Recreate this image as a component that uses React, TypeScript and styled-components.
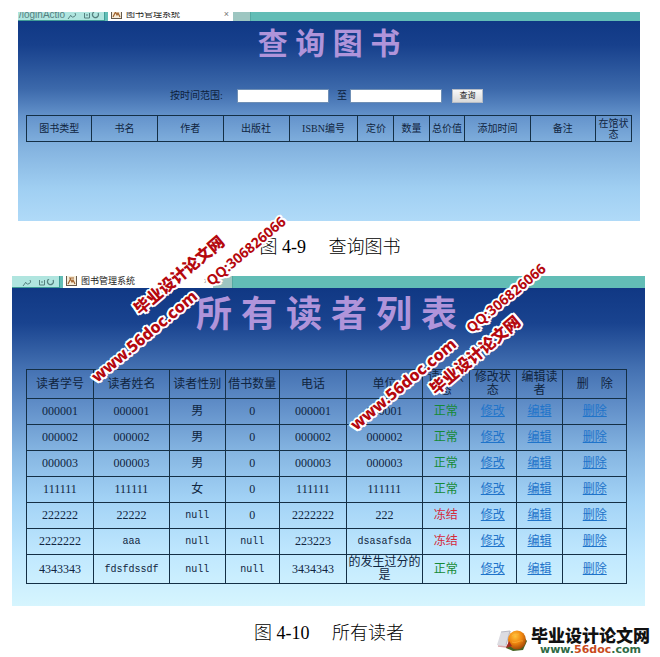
import React from "react";
import styled, { createGlobalStyle, css } from "styled-components";

const serif = `"Liberation Serif", "Noto Sans CJK SC", serif`;
const sans = `"Liberation Sans", "Noto Sans CJK SC", sans-serif`;

const GlobalStyle = createGlobalStyle`
  *, *::before, *::after { box-sizing: border-box; }
  body { margin: 0; background: #fff; font-family: ${serif}; }
`;

const Page = styled.main`
  position: relative;
  padding-top: 12px;
  overflow: hidden;
`;

const BookFigure = styled.section`
  margin: 0 20px 0 18px;
`;

const ReaderFigure = styled.section`
  margin: 0 15px 0 12px;
`;

const TabStrip = styled.div<{ $height: number }>`
  display: flex;
  align-items: stretch;
  height: ${(p) => p.$height}px;
  overflow: hidden;
  background: #62bdb6;
  font-family: ${sans};
`;

const AddressEnd = styled.div<{ $width: number }>`
  display: flex;
  align-items: flex-end;
  justify-content: space-between;
  width: ${(p) => p.$width}px;
  padding: 0 5px 0 1px;
  margin-right: 3px;
  border: solid #3f9d96;
  border-width: 0 1px 1px 0;
  background: #b0e5df;
  color: #55807f;
  font-size: 10px;
  line-height: 10px;
  white-space: nowrap;
`;

const Tab = styled.div<{ $width: number; $size: number }>`
  display: flex;
  align-items: flex-end;
  gap: 4px;
  width: ${(p) => p.$width}px;
  padding: 0 4px 2px 3px;
  background: #fff;
  color: #222;
  font-size: ${(p) => p.$size}px;
  line-height: ${(p) => p.$size}px;
  white-space: nowrap;
`;

const TabClose = styled.span`
  margin-left: auto;
  color: #777;
`;

const NewTab = styled.div<{ $width: number }>`
  width: ${(p) => p.$width}px;
  border-right: 1px solid #55aaa3;
  background: #9dc6c1;
`;

const BookBody = styled.div`
  min-height: 200px;
  padding: 6px 8px 79px;
  background: linear-gradient(#103885 0%, #17408c 12%, #3c69ab 34%, #6594cc 48%, #82b1de 62%, #a0cff2 84%, #b0daf8 100%);
`;

const ReaderBody = styled.div`
  min-height: 318px;
  padding: 4px 18px 21px 14px;
  background: linear-gradient(#103884 0%, #19438f 11%, #4370b1 25%, #6391ca 38%, #86b6e2 52%, #a3d3f6 67%, #c0e8fe 84%, #d6f5fe 100%);
`;

const Title = styled.h1<{ $large?: boolean }>`
  margin: 0;
  color: #b094da;
  font-size: ${(p) => (p.$large ? 36 : 30)}px;
  line-height: ${(p) => (p.$large ? 46 : 34)}px;
  font-weight: 700;
  text-align: center;
`;

const SearchForm = styled.form`
  display: flex;
  align-items: center;
  justify-content: center;
  margin: 28px 5px 12px 0;
  color: #0d1f3c;
  font-size: 10px;
  line-height: 14px;
`;

const StartLabel = styled.label`
  margin-right: 14px;
`;

const EndLabel = styled.label`
  margin: 0 3px 0 8px;
`;

const DateInput = styled.input`
  width: 92px;
  height: 14px;
  padding: 0 2px;
  border: 1px solid #6f8fb5;
  background: #fff;
  font-size: 10px;
`;

const SearchButton = styled.button`
  width: 31px;
  height: 14px;
  margin-left: 10px;
  padding: 0;
  border: 1px solid #b5bcc6;
  background: linear-gradient(#f8f8f8, #d9d9d9);
  color: #222;
  font-family: ${sans};
  font-size: 8px;
  line-height: 12px;
`;

const Grid = styled.table<{ $size: number; $line: number }>`
  width: 100%;
  table-layout: fixed;
  border-collapse: collapse;
  color: #10253f;
  font-size: ${(p) => p.$size}px;
  line-height: ${(p) => p.$line}px;
  text-align: center;
`;

const ReaderTableArea = styled.div`
  margin-top: 31px;
`;

const Col = styled.col<{ $w: number }>`
  width: ${(p) => p.$w}%;
`;

const cell = css`
  padding: 0;
  border: 1px solid #142f45;
  font-weight: 400;
`;

const HeadCell = styled.th<{ $height: number }>`
  ${cell}
  height: ${(p) => p.$height}px;
`;

const Cell = styled.td<{ $mono?: boolean }>`
  ${cell}
  height: 26px;
  ${(p) =>
    p.$mono &&
    css`
      font-family: "Liberation Mono", monospace;
      font-size: 10px;
    `}
`;

const Row = styled.tr<{ $tall?: boolean }>`
  height: ${(p) => (p.$tall ? 29 : 26)}px;
`;

const Status = styled.span<{ $ok: boolean }>`
  color: ${(p) => (p.$ok ? "#158a35" : "#d5293a")};
`;

const ActionLink = styled.a`
  color: #1f74ca;
  text-decoration: underline;
`;

const Caption = styled.p`
  margin: 0;
  color: #000;
  font-size: 18px;
  line-height: 27px;
  font-weight: 300;
  text-align: center;
  white-space: pre;
`;

const MiddleCaption = styled(Caption)`
  padding: 13px 0 15px;
`;

const Footer = styled.footer`
  display: grid;
  grid-template-columns: 1fr auto 1fr;
  align-items: start;
  padding: 14px 10px 0 8px;
`;

const Brand = styled.a`
  display: flex;
  grid-column: 3;
  justify-self: end;
  align-items: center;
  gap: 3px;
  margin-top: 6px;
  color: #111;
  text-decoration: none;
  white-space: nowrap;
`;

const BrandText = styled.span`
  display: flex;
  flex-direction: column;
  align-items: center;
`;

const BrandName = styled.span`
  font-family: "Noto Sans CJK SC", sans-serif;
  font-size: 17px;
  line-height: 17px;
  font-weight: 900;
`;

const BrandUrl = styled.span`
  color: #2f6b45;
  font-family: "DejaVu Sans", sans-serif;
  font-size: 11px;
  line-height: 13px;
  font-weight: 700;
`;

const BrandAccent = styled.span`
  color: #c94b1c;
`;

const Watermark = styled.span<{ $x: number; $y: number; $size: number; $weight: number }>`
  position: absolute;
  left: ${(p) => p.$x}px;
  top: ${(p) => p.$y}px;
  transform: translate(-50%, -50%) rotate(-40deg);
  color: #b5080e;
  font-family: "Noto Sans", "Noto Sans CJK SC", sans-serif;
  font-size: ${(p) => p.$size}px;
  line-height: 20px;
  font-weight: ${(p) => p.$weight};
  white-space: nowrap;
  pointer-events: none;
  text-shadow: 2px 0 #fff, -2px 0 #fff, 0 2px #fff, 0 -2px #fff, 1px 1px #fff, -1px 1px #fff, 1px -1px #fff,
    -1px -1px #fff, 2px 1px #fff, -2px 1px #fff, 2px -1px #fff, -2px -1px #fff;
`;

const TabIcon = () => (
  <svg width="11" height="11" viewBox="0 0 11 11" aria-hidden="true">
    <rect x="0.5" y="0.5" width="10" height="10" fill="#f6ecd8" stroke="#65594c" />
    <path d="M2 9 4.5 4 6 7 7 5l2 4M3 3h5" fill="none" stroke="#a0622d" strokeWidth="1.2" />
  </svg>
);

const StripGlyphs = () => (
  <svg width="32" height="8" viewBox="0 0 32 8" fill="none" stroke="#55807f" aria-hidden="true">
    <path d="M1 7 4 3M4 4a2.5 2.5 0 0 0 4-3" />
    <path d="M17.500 1v5h5V1M19 3h2" />
    <path d="M27 0a3 3 0 1 0 4 1" strokeWidth="1.300" />
  </svg>
);

const BrandMark = () => (
  <svg width="31" height="24" viewBox="0 0 31 24" aria-hidden="true">
    <defs>
      <radialGradient id="orb" cx="0.4" cy="0.3" r="0.75">
        <stop offset="0" stopColor="#ffc23a" />
        <stop offset="0.5" stopColor="#f0860f" />
        <stop offset="1" stopColor="#9a4208" />
      </radialGradient>
    </defs>
    <path d="M4 3 14 2 9 18 0 16z" fill="#dcdce2" />
    <path d="M4 3 13 2 9 16" fill="none" stroke="#b9b9c4" />
    <path d="M1 17 9 18 13 14" fill="none" stroke="#d9a9ad" strokeWidth="1.500" />
    <path d="M12 14 9 19 16 22 26 21 30 12 26 7z" fill="#466321" />
    <ellipse cx="20" cy="11" rx="9" ry="9.500" fill="url(#orb)" />
    <path d="M15 7c3-3 5-1 7-2M15 13c4 2 7-2 11-1" fill="none" stroke="#ffc04a" opacity="0.5" />
    <path d="M12 12 9 19l6-2z" fill="#a52b22" />
  </svg>
);

const bookColumns: [string, number][] = [
  ["图书类型", 65.5],
  ["书名", 65.5],
  ["作者", 66],
  ["出版社", 66],
  ["ISBN编号", 69],
  ["定价", 36],
  ["数量", 35.5],
  ["总价值", 35.5],
  ["添加时间", 65.5],
  ["备注", 65.5],
  ["在馆状态", 36],
];

const readerColumns: [string, number][] = [
  ["读者学号", 67],
  ["读者姓名", 76],
  ["读者性别", 56],
  ["借书数量", 54],
  ["电话", 67.5],
  ["单位", 75.5],
  ["读者状态", 47.5],
  ["修改状态", 46.5],
  ["编辑读者", 47],
  ["删　除", 63.5],
];

const readers = [
  { cells: ["000001", "000001", "男", "0", "000001", "000001"], ok: true },
  { cells: ["000002", "000002", "男", "0", "000002", "000002"], ok: true },
  { cells: ["000003", "000003", "男", "0", "000003", "000003"], ok: true },
  { cells: ["111111", "111111", "女", "0", "111111", "111111"], ok: true },
  { cells: ["222222", "22222", "null", "0", "2222222", "222"], ok: false },
  { cells: ["2222222", "aaa", "null", "null", "223223", "dsasafsda"], ok: false },
  { cells: ["4343343", "fdsfdssdf", "null", "null", "3434343", "的发生过分的是"], ok: true },
];

const share = (columns: [string, number][]) => {
  const total = columns.reduce((sum, c) => sum + c[1], 0);
  return columns.map((c) => (c[1] / total) * 100);
};

const ColumnSet = ({ columns }: { columns: [string, number][] }) => (
  <colgroup>
    {share(columns).map((w, i) => (
      <Col key={i} $w={w} />
    ))}
  </colgroup>
);

const HeadRow = ({ columns, height }: { columns: [string, number][]; height: number }) => (
  <thead>
    <tr>
      {columns.map(([name]) => (
        <HeadCell key={name} scope="col" $height={height}>
          {name}
        </HeadCell>
      ))}
    </tr>
  </thead>
);

export default function App() {
  return (
    <>
      <GlobalStyle />
      <Page>
        <BookFigure>
          <TabStrip $height={9}>
            <AddressEnd $width={87}>
              <span>/loginActio</span>
              <StripGlyphs />
            </AddressEnd>
            <Tab $width={125} $size={9}>
              <TabIcon />
              <span>图书管理系统</span>
              <TabClose>×</TabClose>
            </Tab>
            <NewTab $width={18} />
          </TabStrip>
          <BookBody>
            <Title>查 询 图 书</Title>
            <SearchForm onSubmit={(e) => e.preventDefault()}>
              <StartLabel htmlFor="from">按时间范围:</StartLabel>
              <DateInput id="from" type="text" />
              <EndLabel htmlFor="to">至</EndLabel>
              <DateInput id="to" type="text" />
              <SearchButton type="submit">查询</SearchButton>
            </SearchForm>
            <Grid $size={10} $line={11}>
              <ColumnSet columns={bookColumns} />
              <HeadRow columns={bookColumns} height={26} />
            </Grid>
          </BookBody>
        </BookFigure>

        <MiddleCaption>图 4-9 　查询图书</MiddleCaption>

        <ReaderFigure>
          <TabStrip $height={12}>
            <AddressEnd $width={48}>
              <span />
              <StripGlyphs />
            </AddressEnd>
            <Tab $width={150} $size={9}>
              <TabIcon />
              <span>图书管理系统</span>
              <TabClose>×</TabClose>
            </Tab>
            <NewTab $width={20} />
          </TabStrip>
          <ReaderBody>
            <Title $large>所 有 读 者 列 表</Title>
            <ReaderTableArea>
              <Grid $size={12} $line={13}>
                <ColumnSet columns={readerColumns} />
                <HeadRow columns={readerColumns} height={29} />
                <tbody>
                  {readers.map((r, i) => (
                    <Row key={i} $tall={i === readers.length - 1}>
                      {r.cells.map((text, j) => (
                        <Cell key={j} $mono={/^[a-z]+$/.test(text)}>
                          {text}
                        </Cell>
                      ))}
                      <Cell>
                        <Status $ok={r.ok}>{r.ok ? "正常" : "冻结"}</Status>
                      </Cell>
                      <Cell>
                        <ActionLink href="#modify">修改</ActionLink>
                      </Cell>
                      <Cell>
                        <ActionLink href="#edit">编辑</ActionLink>
                      </Cell>
                      <Cell>
                        <ActionLink href="#delete">删除</ActionLink>
                      </Cell>
                    </Row>
                  ))}
                </tbody>
              </Grid>
            </ReaderTableArea>
          </ReaderBody>
        </ReaderFigure>

        <Footer>
          <span />
          <Caption>图 4-10 　所有读者</Caption>
          <Brand href="#home">
            <BrandMark />
            <BrandText>
              <BrandName>毕业设计论文网</BrandName>
              <BrandUrl>
                www.<BrandAccent>56doc</BrandAccent>.com
              </BrandUrl>
            </BrandText>
          </Brand>
        </Footer>

        <Watermark $x={179} $y={275} $size={16} $weight={900}>毕业设计论文网</Watermark>
        <Watermark $x={144} $y={336} $size={16} $weight={800}>www.56doc.com</Watermark>
        <Watermark $x={246} $y={251} $size={14} $weight={700}>QQ:306826066</Watermark>
        <Watermark $x={475} $y={355} $size={16} $weight={900}>毕业设计论文网</Watermark>
        <Watermark $x={403} $y={384} $size={16} $weight={800}>www.56doc.com</Watermark>
        <Watermark $x={506} $y={298} $size={14} $weight={700}>QQ:306826066</Watermark>
      </Page>
    </>
  );
}
